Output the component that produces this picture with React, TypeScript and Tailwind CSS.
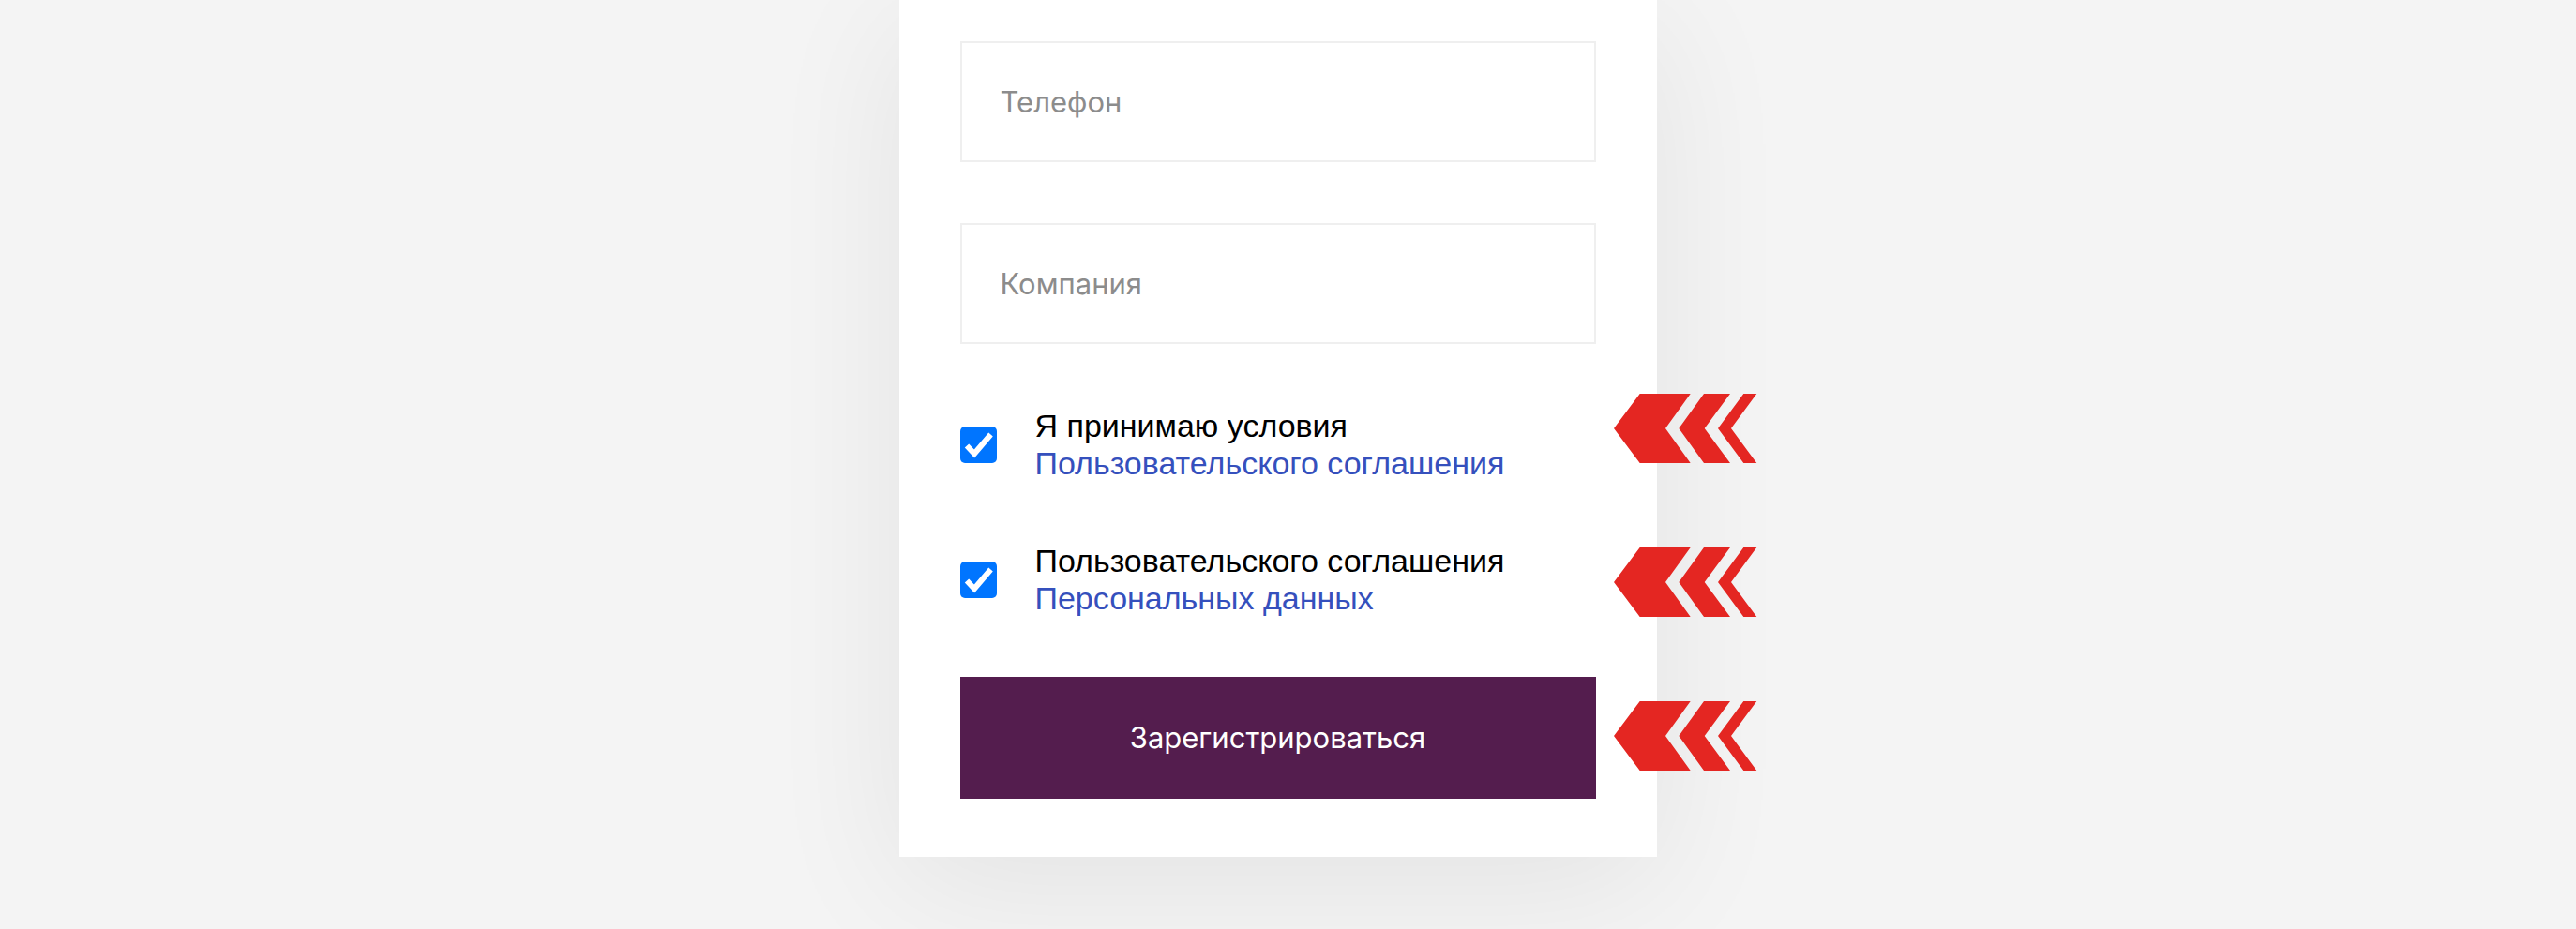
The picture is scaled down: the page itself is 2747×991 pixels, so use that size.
import React from 'react'

function Chevrons({ className }: { className: string }) {
  return (
    <svg
      className={className}
      width="153"
      height="74"
      viewBox="0 0 153 74"
      fill="#e42622"
    >
      <polygon points="0,37 27.7,0 81.7,0 55,37 81.7,74 27.7,74" />
      <polygon points="69.3,37 96,0 124,0 96.7,37 124,74 96,74" />
      <polygon points="111,37 138.3,0 152.3,0 125,37 152.3,74 138.3,74" />
    </svg>
  )
}

function CheckBox() {
  return (
    <span className="block h-[39px] w-[39px] shrink-0 rounded-[5px] bg-[#0075ff]">
      <svg width="39" height="39" viewBox="0 0 39 39">
        <path
          d="M7 20.5 L15 29 L32.5 8.5"
          fill="none"
          stroke="#fff"
          strokeWidth="6"
          strokeLinecap="butt"
          strokeLinejoin="miter"
        />
      </svg>
    </span>
  )
}

function Agreement({
  text,
  link,
  arrowTop,
}: {
  text: string
  link: string
  arrowTop: string
}) {
  return (
    <label className="relative flex items-center gap-[41px]">
      <CheckBox />
      <span className="font-['Liberation_Sans',Arial,sans-serif] text-[34px] leading-[40px] text-black">
        {text}
        <br />
        <a className="text-[#3550bd]">{link}</a>
      </span>
      <Chevrons className={`absolute left-[697px] ${arrowTop}`} />
    </label>
  )
}

export default function App() {
  const field =
    "h-[129px] w-full border-2 border-[#efefef] bg-white px-[41px] font-['Inter',sans-serif] text-[31px] text-[#333] outline-none placeholder:text-[#8c8c8c]"

  return (
    <div className="flex min-h-[991px] justify-center bg-[#f4f4f4] pr-[22px]">
      <div className="h-[914px] w-[808px] bg-white px-[65px] pt-[44px] shadow-[0_30px_140px_rgba(0,0,0,0.07)]">
        <input className={field} placeholder="Телефон" />
        <input className={`${field} mt-[65px]`} placeholder="Компания" />

        <div className="mt-[67px]">
          <Agreement
            text="Я принимаю условия"
            link="Пользовательского соглашения"
            arrowTop="top-[-14px]"
          />
        </div>
        <div className="mt-[64px]">
          <Agreement
            text="Пользовательского соглашения"
            link="Персональных данных"
            arrowTop="top-[6px]"
          />
        </div>

        <div className="relative mt-[64px]">
          <button className="flex h-[130px] w-full items-center justify-center bg-[#541d4e] font-['Inter',sans-serif] text-[31px] text-white">
            Зарегистрироваться
          </button>
          <Chevrons className="absolute left-[697px] top-[26px]" />
        </div>
      </div>
    </div>
  )
}
